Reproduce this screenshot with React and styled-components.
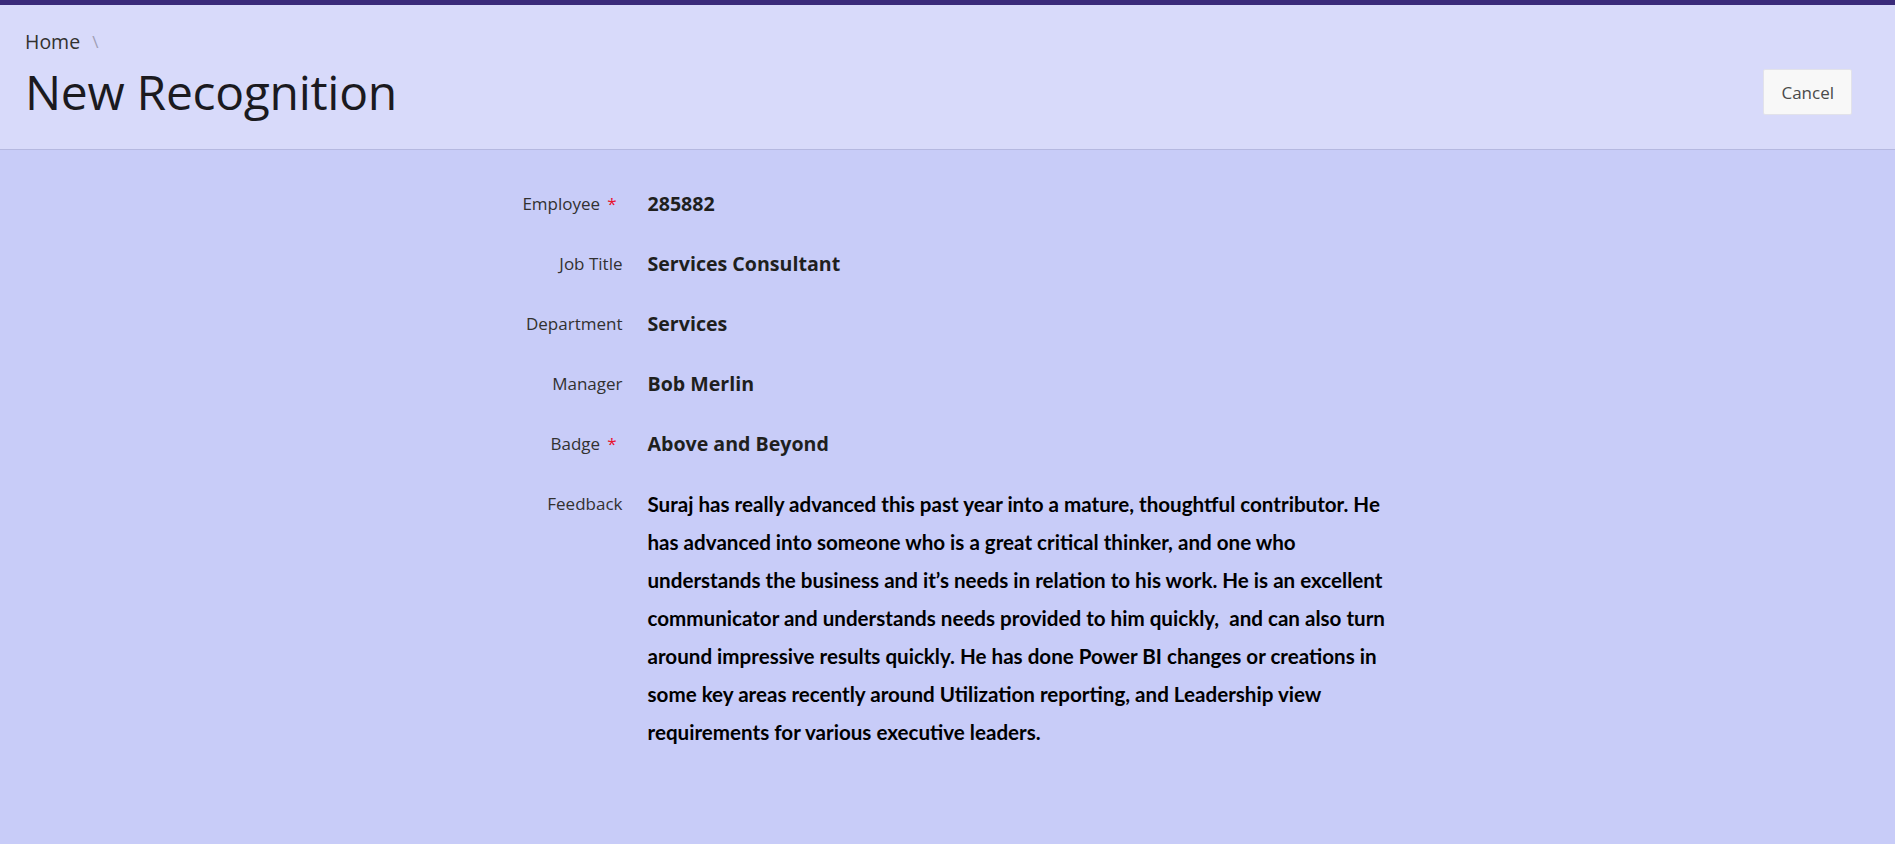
import React from 'react';
import styled, { createGlobalStyle } from 'styled-components';

const GlobalStyle = createGlobalStyle`
    html, body {
        margin: 0;
        padding: 0;
        background: #c8ccf8;
        font-family: "Open Sans", "Noto Sans", sans-serif;
    }
`;

const Page = styled.div`
    min-height: 100vh;
    display: flex;
    flex-direction: column;
    border-top: 5px solid #3a2a7a;
    background: #c8ccf8;
`;

const Header = styled.header`
    display: flex;
    align-items: flex-end;
    justify-content: space-between;
    background: #d8dafa;
    border-bottom: 1px solid #b5b8e0;
    padding: 24px 43px 25px 25px;
`;

const TitleBlock = styled.div`
    display: flex;
    flex-direction: column;
`;

const Breadcrumb = styled.nav`
    display: flex;
    align-items: center;
    gap: 12px;
    font-size: 19.5px;
    line-height: 26px;
    color: #323130;

    span {
        color: #a19fb5;
        font-size: 17px;
    }
`;

const Title = styled.h1`
    margin: 0;
    margin-top: 4px;
    font-size: 48px;
    line-height: 65px;
    font-weight: 500;
    color: #1b1a1f;
    letter-spacing: -0.3px;
`;

const Button = styled.button`
    font-family: inherit;
    font-size: 17px;
    color: #4a4a4a;
    background: #f8f8f8;
    border: 1px solid #e2e2ea;
    border-radius: 2px;
    height: 46px;
    padding: 0 17px;
    margin-bottom: 9px;
    cursor: pointer;
`;

const Form = styled.main`
    display: grid;
    grid-template-columns: 225px 1fr;
    column-gap: 25px;
    width: 1100px;
    margin: 0 auto;
    padding-top: 24px;
`;

const Label = styled.div`
    text-align: right;
    font-size: 17px;
    color: #323130;
    line-height: 60px;
    height: 60px;
    padding-right: ${p => (p.required ? '6px' : '0')};

    b {
        color: #e8112d;
        font-weight: 400;
        margin-left: 7px;
    }
`;

const Value = styled.div`
    font-size: 19.6px;
    font-weight: 700;
    color: #201f1e;
    line-height: 60px;
    height: 60px;
`;

const Feedback = styled.div`
    font-family: Lato, "Open Sans", sans-serif;
    font-size: 20.6px;
    font-weight: 700;
    color: #000;
    line-height: 38px;
    max-width: 758px;
    padding-top: 11px;
`;

const rows = [
    { label: 'Employee', value: '285882', required: true },
    { label: 'Job Title', value: 'Services Consultant' },
    { label: 'Department', value: 'Services' },
    { label: 'Manager', value: 'Bob Merlin' },
    { label: 'Badge', value: 'Above and Beyond', required: true },
];

const feedback =
    'Suraj has really advanced this past year into a mature, thoughtful contributor. He has advanced into someone who is a great critical thinker, and one who understands the business and it\u2019s needs in relation to his work. He is an excellent communicator and understands needs provided to him quickly,\u00a0 and can also turn around impressive results quickly. He has done Power BI changes or creations in some key areas recently around Utilization reporting, and Leadership view requirements for various executive leaders.';

export default function App() {
    return (
        <Page>
            <GlobalStyle />
            <Header>
                <TitleBlock>
                    <Breadcrumb>
                        Home <span>\</span>
                    </Breadcrumb>
                    <Title>New Recognition</Title>
                </TitleBlock>
                <Button>Cancel</Button>
            </Header>
            <Form>
                {rows.map(r => (
                    <React.Fragment key={r.label}>
                        <Label required={r.required}>
                            {r.label}
                            {r.required && <b>*</b>}
                        </Label>
                        <Value>{r.value}</Value>
                    </React.Fragment>
                ))}
                <Label>Feedback</Label>
                <Feedback>{feedback}</Feedback>
            </Form>
        </Page>
    );
}
